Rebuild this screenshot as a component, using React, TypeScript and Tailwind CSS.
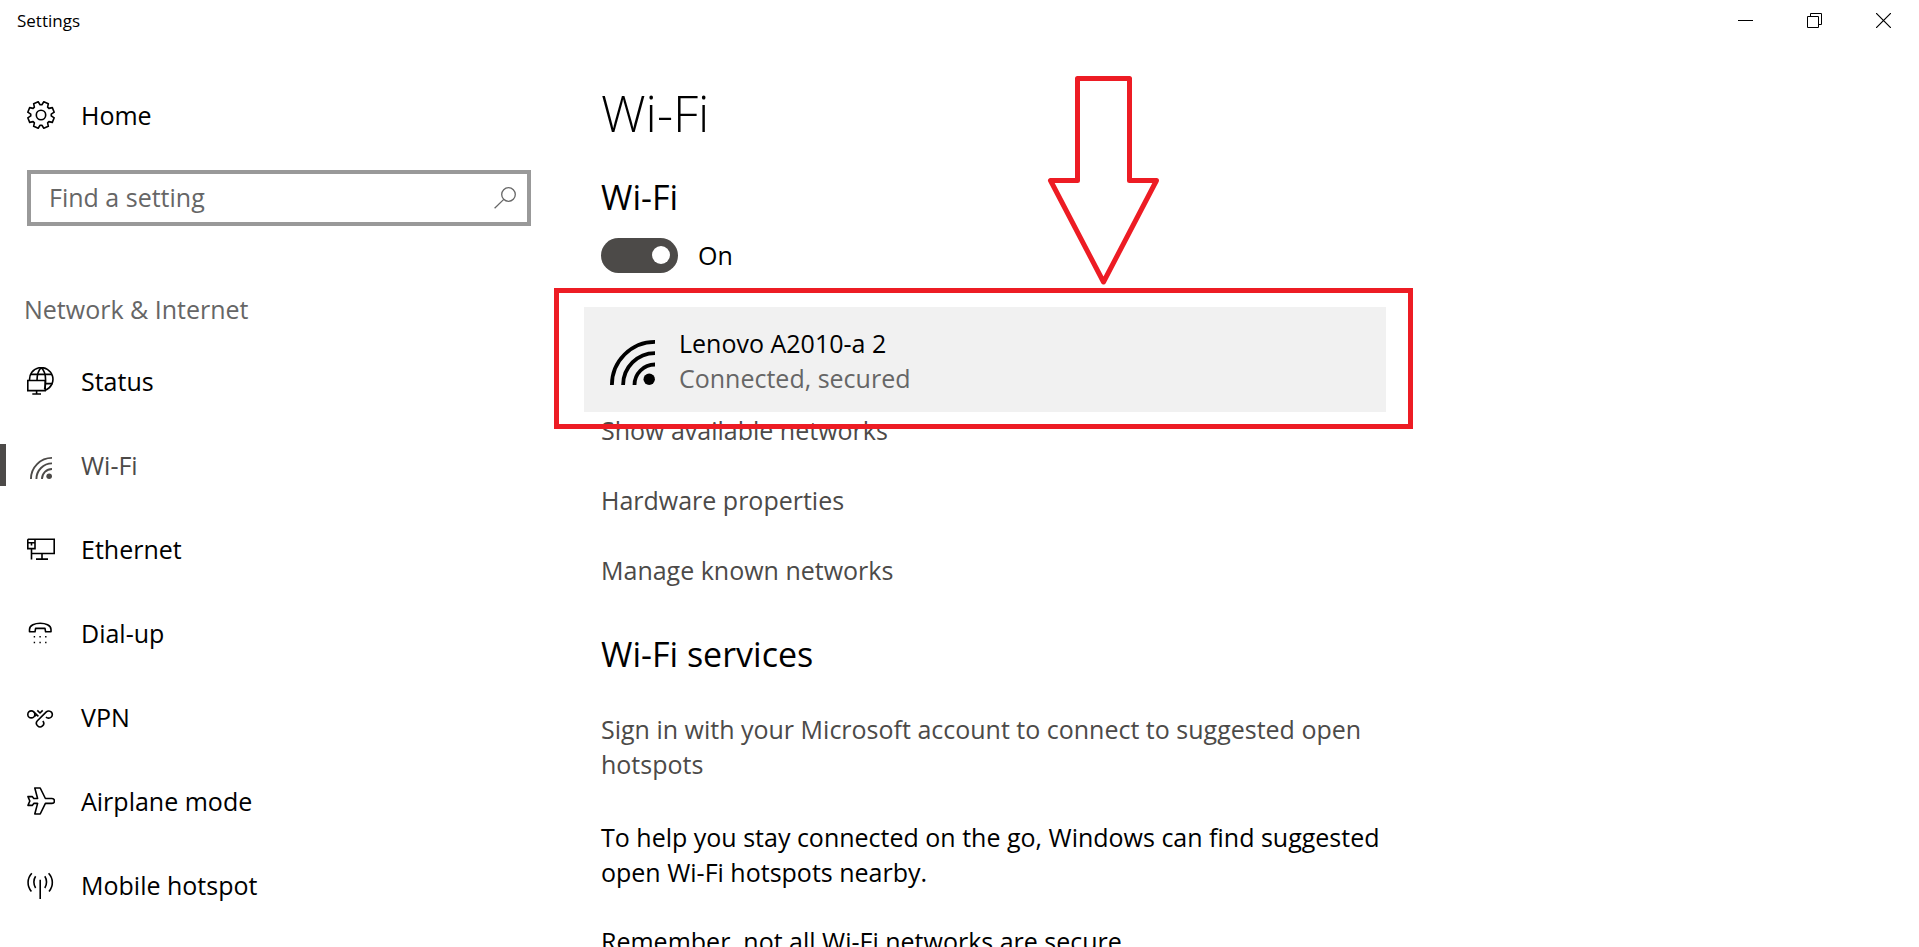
import React from 'react';

type IconProps = { className?: string };

const Glyph: React.FC<{ children: React.ReactNode }> = ({ children }) => (
  <svg
    className="w-7 h-7 shrink-0"
    viewBox="0 0 28 28"
    fill="none"
    stroke="currentColor"
    strokeWidth="1.6"
    aria-hidden="true"
  >
    {children}
  </svg>
);

// Eight teeth separated by narrow notches
const gearPath = () => {
  const steps: [number, number][] = [
    [-12, 13.5],
    [-5, 10.3],
    [5, 10.3],
    [12, 13.5],
  ];
  const points: string[] = [];
  for (let i = 0; i < 8; i++) {
    steps.forEach(([offset, radius]) => {
      const angle = ((i * 45 + offset) * Math.PI) / 180;
      const x = 14 + radius * Math.cos(angle);
      const y = 14 + radius * Math.sin(angle);
      points.push(`${x.toFixed(2)} ${y.toFixed(2)}`);
    });
  }
  return `M${points.join('L')}Z`;
};

const GearIcon = () => (
  <Glyph>
    <path d={gearPath()} strokeLinejoin="round" />
    <circle cx="14" cy="14" r="4.7" />
  </Glyph>
);

const StatusIcon = () => (
  <Glyph>
    <path d="M2.6 13.5A11.7 11.7 0 1 1 18.5 23.2" />
    <path d="M10 13.5C10 8 11.5 3 14.2.6C17 3 18.6 8 18.6 13C18.6 17 18.3 20 17.5 22" />
    <path d="M3.5 7.4H25M18.3 16.6H25.6" />
    <path d="M.8 13.5H18.2V23.6H.8Z" />
    <path d="M9.6 23.6V27M5.3 27H14" />
  </Glyph>
);

const WifiIcon: React.FC<IconProps> = ({ className }) => (
  <svg
    className={className}
    viewBox="0 0 45 45"
    fill="none"
    stroke="currentColor"
    strokeWidth="3.8"
    aria-hidden="true"
  >
    <path d="M1.9 45A43.1 43.1 0 0 1 45 1.9" />
    <path d="M13.1 45A31.9 31.9 0 0 1 45 13.1" />
    <path d="M24.5 45A20.5 20.5 0 0 1 45 24.5" />
    <circle cx="39.2" cy="39.3" r="5.7" fill="currentColor" stroke="none" />
  </svg>
);

const EthernetIcon = () => (
  <Glyph>
    <path d="M.8 4.2H27.2V18.5H4.5" />
    <path d="M.8 4.2V13.6H8V4.2M.8 7.8H8M4.5 7.8V10.6M4.5 13.6V24.6" />
    <path d="M15 18.5V24M9 24.1H21" />
  </Glyph>
);

const DialUpIcon = () => (
  <Glyph>
    <path
      d="M2.5 12.8V10.4C2.5 6.2 8 4.3 13.2 4.3S24 6.2 24 10.4V12.8H18.6L18 9.4H8.6L8 12.8Z"
      strokeLinejoin="round"
    />
    <path d="M6.7 17.7H20M6.7 23.5H20" strokeDasharray="1.4 4.3" strokeWidth="1.4" />
  </Glyph>
);

const VpnIcon = () => (
  <Glyph>
    <circle cx="4.3" cy="11.4" r="3.5" />
    <path d="M6.9 9L11.4 13.4M8 13.2L9.6 11.4" />
    <path d="M10.3 7.4L13 10L15.7 7.4" />
    <path d="M19 13.9A3.6 3.6 0 1 0 19.3 8.9L10.4 17.8A3.6 3.6 0 1 0 15.8 17.9" />
  </Glyph>
);

const AirplaneIcon = () => (
  <Glyph>
    <path
      d="M7.8 1H13.2L18.4 11.5H25A2.4 2.4 0 0 1 25 16.4H18.4L13.2 27H7.8L10.6 16.4H6.8L5.2 18.4H1L2.8 14L1 9.6H5.2L6.8 11.5H10.6Z"
      strokeLinejoin="round"
    />
  </Glyph>
);

const HotspotIcon = () => (
  <Glyph>
    <path d="M13.2 8.7V28" />
    <path d="M8.6 5.2C6.3 8.6 6.3 13.6 8.6 17M17.8 5.2C20.1 8.6 20.1 13.6 17.8 17" />
    <path d="M4.8 2.2C0 7.4-.2 14.8 4.4 20.4M21.6 2.2C26.4 7.4 26.6 14.8 22 20.4" />
  </Glyph>
);

const navItems = [
  { label: 'Status', icon: <StatusIcon /> },
  {
    label: 'Wi-Fi',
    icon: (
      <span className="flex w-7 h-7 items-end justify-center">
        <WifiIcon className="w-[22px] h-[22px]" />
      </span>
    ),
    active: true,
  },
  { label: 'Ethernet', icon: <EthernetIcon /> },
  { label: 'Dial-up', icon: <DialUpIcon /> },
  { label: 'VPN', icon: <VpnIcon /> },
  { label: 'Airplane mode', icon: <AirplaneIcon /> },
  { label: 'Mobile hotspot', icon: <HotspotIcon /> },
];

const TitleBar: React.FC = () => (
  <header className="flex h-[41px] shrink-0 items-center justify-between pr-px pl-[17px]">
    <span className="text-[17px]">Settings</span>
    <div className="flex h-full">
      <button className="flex w-[69px] items-center justify-center" aria-label="Minimize">
        <svg className="w-[15px] h-[15px]" viewBox="0 0 15 15" stroke="currentColor">
          <path d="M0 7.5H15" />
        </svg>
      </button>
      <button className="flex w-[69px] items-center justify-center" aria-label="Restore">
        <svg className="w-[15px] h-[15px]" viewBox="0 0 15 15" fill="none" stroke="currentColor">
          <path d="M.5 3.5H11.5V14.5H.5ZM3.5 3.5V.5H14.5V11.5H11.5" />
        </svg>
      </button>
      <button className="flex w-[69px] items-center justify-center" aria-label="Close">
        <svg className="w-[15px] h-[15px]" viewBox="0 0 15 15" stroke="currentColor">
          <path d="M0 0L15 15M15 0L0 15" strokeWidth="1.2" />
        </svg>
      </button>
    </div>
  </header>
);

const Sidebar: React.FC = () => (
  <aside className="w-[560px] shrink-0 pt-[46px]">
    <a href="#home" className="flex h-14 items-center gap-[26px] pl-[27px]">
      <GearIcon />
      Home
    </a>

    <label className="mt-[27px] mr-[29px] ml-[27px] flex h-14 items-center border-4 border-[#999] pr-2.5 pb-0.5 pl-[18px]">
      <input
        type="text"
        aria-label="Find a setting"
        placeholder="Find a setting"
        className="min-w-0 flex-1 bg-transparent outline-none placeholder:text-[#666]"
      />
      <svg
        className="w-6 h-6 shrink-0 text-[#666]"
        viewBox="0 0 24 24"
        fill="none"
        stroke="currentColor"
        strokeWidth="1.3"
        aria-hidden="true"
      >
        <circle cx="15.5" cy="9.5" r="6.8" />
        <path d="M10.8 14.4L1.6 23.2" />
      </svg>
    </label>

    <h2 className="mt-[65px] pl-6 leading-9 text-[#666]">Network &amp; Internet</h2>

    <nav className="mt-3">
      {navItems.map(item => (
        <a
          key={item.label}
          href={`#${item.label}`}
          className={`flex h-[84px] items-center ${item.active ? 'text-[#4c4a48]' : ''}`}
        >
          <span className={`h-[42px] w-1.5 ${item.active ? 'bg-[#4c4a48]' : ''}`} />
          <span className="ml-[21px] flex items-center gap-[26px]">
            {item.icon}
            {item.label}
          </span>
        </a>
      ))}
    </nav>
  </aside>
);

const Callout: React.FC = () => (
  <>
    <svg
      className="pointer-events-none absolute -top-[231px] left-[463px] h-[212px] w-28"
      viewBox="0 0 112 212"
      fill="none"
      stroke="#ed1c24"
      strokeWidth="5"
      strokeLinejoin="round"
      aria-hidden="true"
    >
      <path d="M30.5 2.5H82.5V104.5H109.5L56.5 206L3.5 104.5H30.5Z" />
    </svg>
    <div className="pointer-events-none absolute -top-[19px] -right-[27px] -bottom-[17px] -left-[30px] border-5 border-[#ed1c24]" />
  </>
);

const WifiPage: React.FC = () => (
  <main className="min-w-0 flex-1 pt-10 pr-10 pl-[41px]">
    <div className="max-w-[785px]">
      <h1 className="text-[50px] leading-[64px] font-light">Wi-Fi</h1>

      <h2 className="mt-7 text-[34px] leading-[48px]">Wi-Fi</h2>
      <div className="mt-4 flex h-9 items-center gap-5">
        <button
          role="switch"
          aria-checked="true"
          aria-labelledby="wifi-state"
          className="flex h-[35px] w-[77px] items-center justify-end rounded-full bg-[#4c4a48] pr-2"
        >
          <span className="h-[18px] w-[18px] rounded-full bg-white" />
        </button>
        <span id="wifi-state">On</span>
      </div>

      <div className="relative z-10 mt-[34px] -ml-[17px]">
        <button className="flex h-[105px] w-full items-center gap-6 bg-[#f1f1f1] pl-[26px] text-left">
          <WifiIcon className="w-[45px] h-[45px] mt-[6px]" />
          <span className="pt-0.5">
            <span className="block">Lenovo A2010-a 2</span>
            <span className="block text-[#666]">Connected, secured</span>
          </span>
        </button>
        <Callout />
      </div>

      <div className="mt-px flex flex-col items-start gap-[35px] text-[#4c4a48]">
        <a href="#available">Show available networks</a>
        <a href="#hardware">Hardware properties</a>
        <a href="#known">Manage known networks</a>
      </div>

      <h2 className="mt-[42px] text-[34px] leading-[48px]">Wi-Fi services</h2>
      <a href="#signin" className="mt-[34px] block text-[#4c4a48]">
        Sign in with your Microsoft account to connect to suggested open hotspots
      </a>
      <p className="mt-[38px]">
        To help you stay connected on the go, Windows can find suggested open
        Wi-Fi hotspots nearby.
      </p>
      <p className="mt-[34px]">Remember, not all Wi-Fi networks are secure.</p>
    </div>
  </main>
);

export default function App() {
  return (
    <div className="flex h-screen flex-col overflow-hidden bg-white font-['Open_Sans','Noto_Sans',sans-serif] text-[25px] leading-[35px] text-black">
      <TitleBar />
      <div className="flex min-h-0 flex-1">
        <Sidebar />
        <WifiPage />
      </div>
    </div>
  );
}
